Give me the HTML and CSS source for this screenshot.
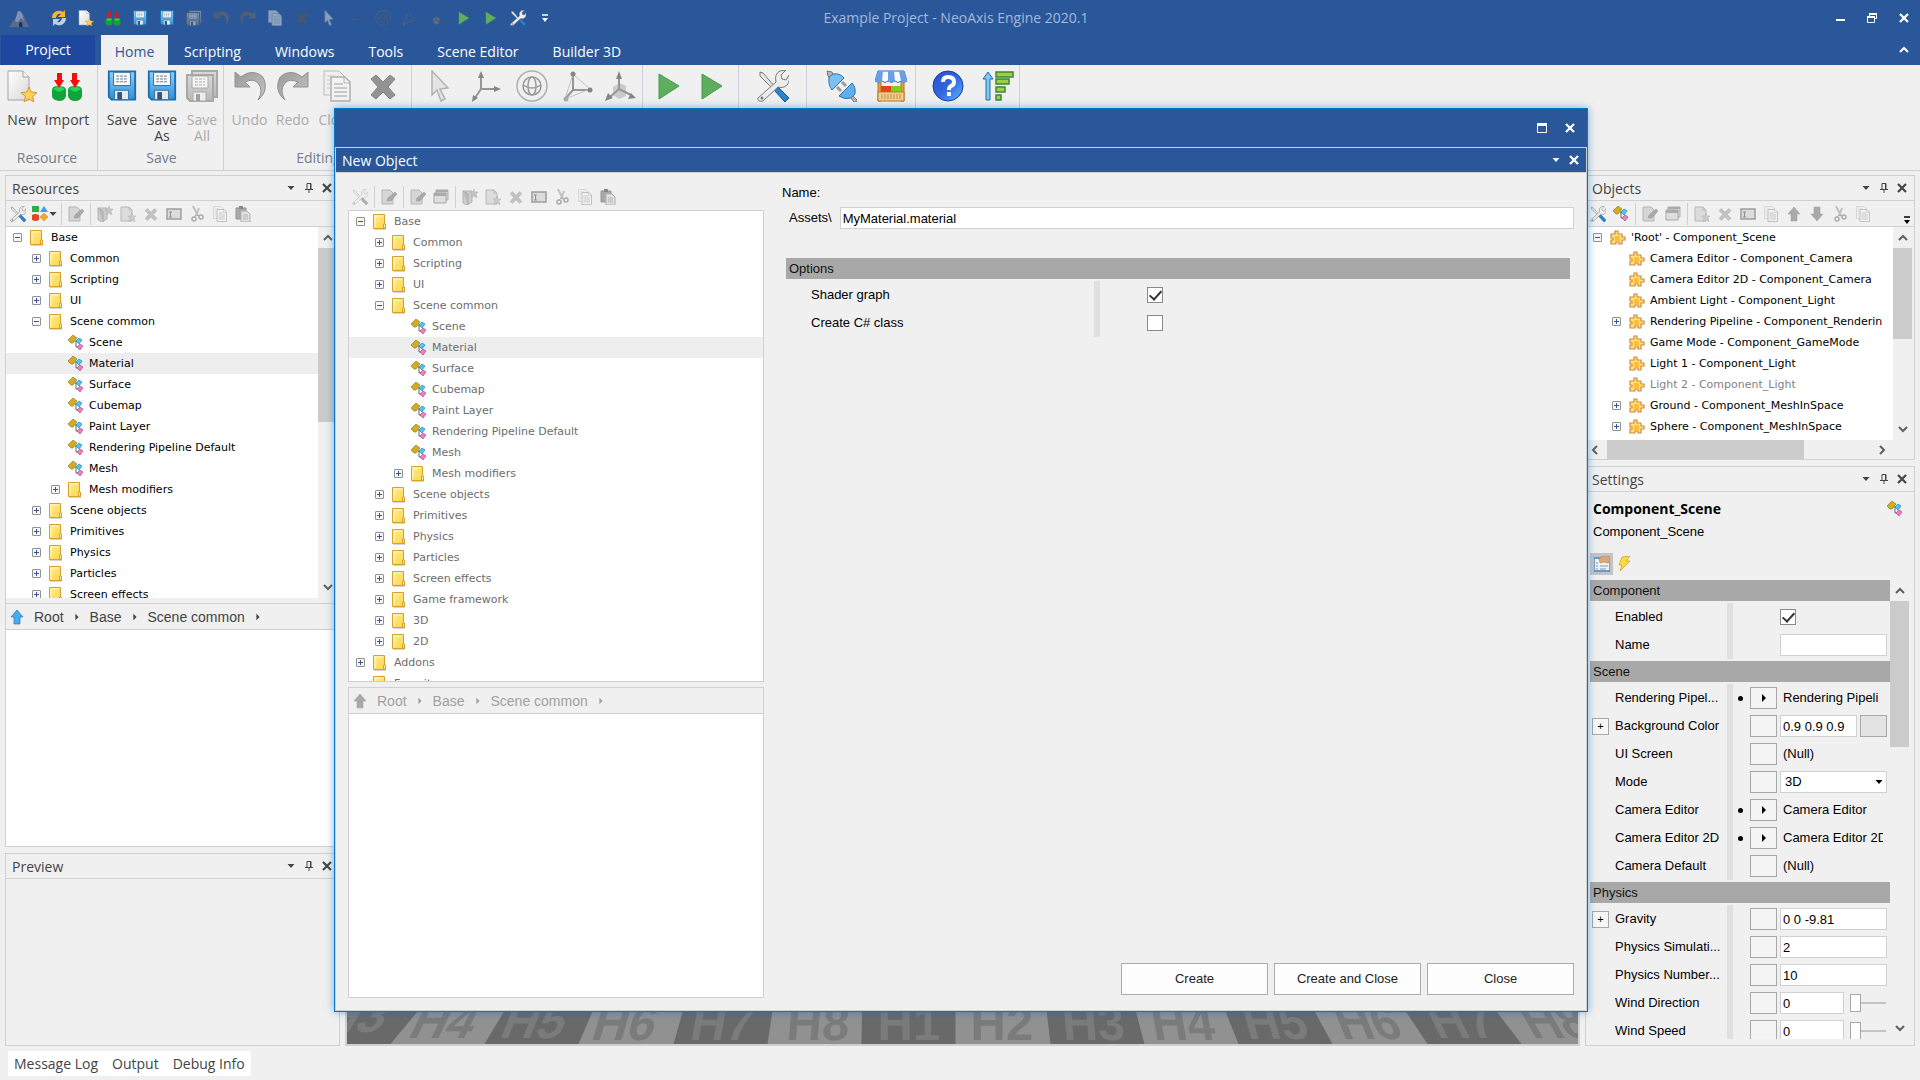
FILE: index.html
```html
<!DOCTYPE html>
<html lang="en">
<head>
  <meta charset="utf-8" />
  <meta name="viewport" content="width=device-width, initial-scale=1" />
  <title>Example Project - NeoAxis Engine 2020.1</title>
  <link rel="stylesheet" href="styles.css">
</head>
<body>
  <!-- Icon sprite -->
  <svg class="sprite" aria-hidden="true">
    <defs>
      <linearGradient id="g-blue" x1="0" y1="0" x2="0" y2="1"><stop offset="0" stop-color="#8fd0fb"/><stop offset="1" stop-color="#2f8fd8"/></linearGradient>
      <linearGradient id="g-page" x1="0" y1="0" x2="1" y2="1"><stop offset="0" stop-color="#ffffff"/><stop offset="1" stop-color="#d9d9d9"/></linearGradient>
      <linearGradient id="g-help" x1="0" y1="0" x2="1" y2="1"><stop offset="0" stop-color="#2a4fd0"/><stop offset=".5" stop-color="#2f66de"/><stop offset="1" stop-color="#5fb6ff"/></linearGradient>
      <linearGradient id="g-fold" x1="0" y1="0" x2="1" y2="1"><stop offset="0" stop-color="#fff0a0"/><stop offset=".5" stop-color="#fce068"/><stop offset="1" stop-color="#fad94f"/></linearGradient>
      <linearGradient id="g-grey" x1="0" y1="0" x2="1" y2="1"><stop offset="0" stop-color="#9a9a9a"/><stop offset="1" stop-color="#c4c4c4"/></linearGradient>

      <symbol id="i-logo" viewBox="0 0 20 20"><path d="M9 3q3-1 5 3l6 13h-6v-3q-1-3-3-1v4H0l4-6 2-2z" fill="#5d6b85"/><path d="M9 3q3 0 4 3l2 7-3-3-3 4-3-1z" fill="#7f93b8"/><path d="M10 19v-4q2-2 3 0v4z" fill="#1c3257"/></symbol>
      <symbol id="i-refresh" viewBox="0 0 16 16"><path d="M1 8a7 7 0 0 1 11-6l2-2v7H7l3-3q-4-1-5 4z" fill="#f7b928"/><path d="M15 8a7 7 0 0 1-11 6l-2 2V9h7l-3 3q4 1 5-4z" fill="#c3d0e2"/></symbol>
      <symbol id="i-new" viewBox="0 0 32 32"><path d="M2 1h15l6 6v23H2z" fill="url(#g-page)" stroke="#a3a3a3"/><path d="M17 1v6h6" fill="#f4f4f4" stroke="#a3a3a3"/><path d="m23 17 2 5 6 .6-4.500 4 1.500 5.400-5-3-5 3 1.500-5.400-4.500-4 6-.6z" fill="#ffd15c" stroke="#d8922a"/></symbol>
      <symbol id="i-import" viewBox="0 0 32 32"><path d="M1 20q0-4 6-4 8 0 8 4v6q-1 5-7 5-7-1-7-5zM17 20q0-4 7-4t7 4v6q-1 5-7 5t-7-5z" fill="#12a43a"/><path d="M2 19q6-5 12 0l-6 3zM18 19q6-5 12 0l-6 3z" fill="#27d557"/><path d="M6 3h5v7h2l-5 8-5-8h3zM21 3h5v7h3l-5 8-5-8h2z" fill="#f80d0d"/></symbol>
      <symbol id="i-save" viewBox="-1 0 34 33"><path d="M2 1h28v30H5l-3-3z" fill="url(#g-blue)" stroke="#1b6fae" stroke-width="2"/><path d="M7 2h18v14H7z" fill="#f7fafc" stroke="#2a6fa5"/><path d="M10 6h12M10 9h12M10 12h12" stroke="#5a6e80" stroke-dasharray="3 1"/><path d="M8 21h15v10H8z" fill="#e3ebf1" stroke="#2a6fa5"/><path d="M11 23h5v8h-5z" fill="#31587a"/></symbol>
      <symbol id="i-saveall" viewBox="0 0 32 32"><path d="M6 1h25v26H6z" fill="url(#g-blue)" stroke="#1b6fae" stroke-width="2"/><path d="M1 5h26v26H4l-3-3z" fill="url(#g-blue)" stroke="#1b6fae" stroke-width="2"/><path d="M6 6h16v12H6z" fill="#f7fafc" stroke="#2a6fa5"/><path d="M9 9h10M9 12h10M9 15h10" stroke="#5a6e80" stroke-dasharray="3 1"/><path d="M7 22h13v9H7z" fill="#e3ebf1" stroke="#2a6fa5"/><path d="M10 24h4v7h-4z" fill="#31587a"/></symbol>
      <symbol id="i-undo" viewBox="0 0 32 32"><path d="M1 2v15h15l-5-5q8-4 13 1 6 7 0 17 9-7 7-17-1-8-9-10-8-2-15 4z" fill="url(#g-grey)" stroke="#929292"/></symbol>
      <symbol id="i-redo" viewBox="0 0 32 32"><path d="M31 2v15H16l5-5q-8-4-13 1-6 7 0 17-9-7-7-17 1-8 9-10 8-2 15 4z" fill="url(#g-grey)" stroke="#929292"/></symbol>
      <symbol id="i-copy" viewBox="0 0 32 32"><path d="M3 1h15l5 5v19H3z" fill="#efefef" stroke="#bcbcbc"/><path d="M6 6h8M6 10h3M6 14h3M6 18h3" stroke="#c9c9c9"/><path d="M10 7h14l5 5v19H10z" fill="#f3f3f3" stroke="#b0b0b0" stroke-width="1.500"/><path d="M23 7v6h6" fill="none" stroke="#b5b5b5"/><path d="M13 14h9M13 18h13M13 22h13M13 26h13" stroke="#bababa" stroke-width="1.500"/></symbol>
      <symbol id="i-x" viewBox="0 0 32 32"><path d="m9 5 7 7 7-7 5 4-7 8 7 8-5 4-7-7-7 7-5-4 7-8-7-8z" fill="#939393" stroke="#858585"/></symbol>
      <symbol id="i-cursor" viewBox="0 0 32 32"><path d="M8 1l16 17-8 1 5 10-4 2-4-11-5 5z" fill="#e4e4e4" stroke="#b2b2b2" stroke-width="1.500"/></symbol>
      <symbol id="i-axes" viewBox="0 0 32 32"><path d="M11 19V5M11 19h15M11 19 5 28" fill="none" stroke="#969696" stroke-width="2"/><path d="m11 1 3 7H8zM31 19l-7 3v-6zM2 32l1-7 5 3z" fill="#868686"/></symbol>
      <symbol id="i-rotate" viewBox="0 0 32 32"><circle cx="16" cy="16" r="15" fill="none" stroke="#b0b0b0" stroke-width="1.500"/><circle cx="16" cy="16" r="9" fill="none" stroke="#999" stroke-width="1.500"/><ellipse cx="16" cy="16" rx="4" ry="9" fill="none" stroke="#999" stroke-width="1.500"/><path d="M7 15q9 6 18 0" fill="none" stroke="#999" stroke-width="1.500"/></symbol>
      <symbol id="i-vertex" viewBox="0 0 32 32"><path d="M11 20V5M11 20h17M11 20 3 29" fill="none" stroke="#969696" stroke-width="2"/><path d="M11 4l17 15M11 4 3 29l25-10" fill="none" stroke="#c2c2c2"/><circle cx="11" cy="4" r="2.500" fill="#868686"/><circle cx="28" cy="20" r="2.500" fill="#868686"/><circle cx="4" cy="29" r="2.500" fill="#ababab"/></symbol>
      <symbol id="i-scale" viewBox="0 0 32 32"><path d="m8 17 7-4 6 3v10l-7 3-6-4z" fill="#cbcbcb"/><path d="M14 19V6M14 19l12 6M14 19 5 27" fill="none" stroke="#969696" stroke-width="2"/><path d="m14 1 3 8h-6zM31 28l-8 1 3-6zM0 31l3-8 5 5z" fill="#868686"/></symbol>
      <symbol id="i-play" viewBox="0 0 32 32"><path d="M6 4l20 12L6 29z" fill="#5fae5f" stroke="#479a4d"/></symbol>
      <symbol id="i-tools" viewBox="0 0 32 32"><path d="m3 2 3 1 12 14-2 2L3 6z" fill="#e8e8e8" stroke="#777"/><path d="m17 20 3-4 12 12-4 4z" fill="#2b82cd" stroke="#15558f"/><path d="M1 28 19 12q-2-8 4-11l6-1-5 5 1 4 4 1 3-5q2 9-5 12-3 1-6 0L6 31q-6 1-5-3z" fill="#ededed" stroke="#7b7b7b"/><circle cx="5" cy="28" r="1.500" fill="#777"/></symbol>
      <symbol id="i-plug" viewBox="0 0 32 32"><path d="m2 1 5 1 2 5-3 2-3-3z" fill="#b5b5b5" stroke="#777"/><path d="m4 7 4-3q7-1 11 4L7 20q-4-5-3-13z" fill="#7dc0f5" stroke="#2d74ae"/><path d="m12 17 4 4M17 12l4 4" stroke="#9a9a9a" stroke-width="3"/><path d="M14 26 27 13q4 4 3 11l-4 4q-7 2-12-2z" fill="#5eaff0" stroke="#2d74ae"/><path d="m26 28 2-2 4 4v2h-3z" fill="#b5b5b5" stroke="#777"/></symbol>
      <symbol id="i-store" viewBox="0 0 32 32"><path d="M3 9h3v22H3zM26 9h3v22h-3z" fill="#e2a24a" stroke="#b27322"/><path d="M6 16h10v6H6z" fill="#e7421d"/><path d="M16 16h10v6H16z" fill="#7bd01c"/><path d="M3 22h26v9H3z" fill="#f3cf8c" stroke="#b87626"/><path d="M7 24v5M10 24v5M13 24v5M16 24v5M19 24v5M22 24v5M25 24v5" stroke="#c1883c"/><path d="M3 1h26l3 10q-3 3-6 0-3 3-6 0-3 3-7 0-3 3-6 0-3 3-7 0z" fill="#f6f9fd" stroke="#3d6bb5"/><path d="M3 1h5l-1 10q-3 3-7 0zM13 1h6l1 10q-3 3-7 0zM24 1h5l3 10q-3 3-6 0z" fill="#6a9fe8"/></symbol>
      <symbol id="i-help" viewBox="0 0 32 32"><circle cx="16" cy="16" r="15" fill="url(#g-help)" stroke="#1c3a9f"/><path d="M11 12q0-5 5-5 6 0 6 5 0 3-3 4-2 1-2 4" fill="none" stroke="#fff" stroke-width="4"/><path d="M15 22h4v4h-4z" fill="#fff"/></symbol>
      <symbol id="i-sort" viewBox="0 0 32 32"><path d="M4 30V9H1l5-7 5 7H8v21z" fill="#80c8f3" stroke="#266da6"/><path d="M14 2h17v5H14zM14 9h13v5H14zM14 17h9v5h-9zM14 25h5v5h-5z" fill="#9cd04a" stroke="#3d8735" stroke-width="1.500"/></symbol>

      <symbol id="i-edit" viewBox="0 0 16 16"><path d="M1 1h8l3 3v11H1z" fill="#d6d6d6" stroke="#b5b5b5"/><path d="M6 12l1-3 7-6 2 2-6 7z" fill="#a9a9a9" stroke="#999" stroke-width=".5"/></symbol>
      <symbol id="i-windows" viewBox="0 0 16 16"><path d="M3 1h12v10H3z" fill="#d9d9d9" stroke="#acacac"/><path d="M1 4h12v10H1z" fill="#dedede" stroke="#a8a8a8"/><path d="M1 4h12v3H1zM3 1h12v2H3z" fill="#ababab"/></symbol>
      <symbol id="i-box" viewBox="0 0 16 16"><path d="M1 2h9v11l-5 3-4-2z" fill="#cdcdcd" stroke="#b5b5b5"/><path d="m1 2 5 3v11" fill="#bcbcbc" stroke="#aaa"/><path d="m12 0 1 3h3l-2 2 1 4-3-2-3 2 1-4-2-2h3z" fill="#c4c4c4" stroke="#b0b0b0" stroke-width=".5"/></symbol>
      <symbol id="i-newdoc" viewBox="0 0 16 16"><path d="M1 1h8l3 3v11H1z" fill="#dcdcdc" stroke="#b8b8b8"/><path d="M9 1v3h3" fill="none" stroke="#b8b8b8"/><path d="m12 7 1 3h3l-2 2 1 4-3-2-3 2 1-4-2-2h3z" fill="#cbcbcb" stroke="#b3b3b3" stroke-width=".5"/></symbol>
      <symbol id="i-rename" viewBox="0 0 16 16"><path d="M1 3h14v10H1z" fill="#dcdcdc" stroke="#9d9d9d" stroke-width="1.500"/><path d="M3 6h3M3 11h3M4.500 6v5" stroke="#8f8f8f"/></symbol>
      <symbol id="i-cut" viewBox="0 0 16 16"><path d="m4 0 5 10M10 2 7 10" stroke="#c0c0c0" stroke-width="2"/><circle cx="5" cy="13" r="2" fill="none" stroke="#ababab" stroke-width="1.500"/><circle cx="12" cy="11" r="2" fill="none" stroke="#ababab" stroke-width="1.500"/><path d="m5 11 2-2 3 1" fill="none" stroke="#ababab"/></symbol>
      <symbol id="i-paste" viewBox="0 0 16 16"><path d="M1 2h10v11H1z" fill="#a9a9a9" stroke="#969696"/><path d="M4 0h4v3H4z" fill="#888"/><path d="M6 5h6l3 3v8H6z" fill="#e2e2e2" stroke="#b0b0b0"/><path d="M8 9h5M8 11h5M8 13h5" stroke="#b5b5b5"/></symbol>
      <symbol id="i-up" viewBox="0 0 16 16"><path d="m8 1 6 7h-3v7H5V8H2z" fill="#a9a9a9" stroke="#9c9c9c" stroke-width=".5"/></symbol>
      <symbol id="i-upblue" viewBox="0 0 16 16"><path d="m8 1 6 7h-3v7H5V8H2z" fill="#44aef0" stroke="#2876ae" stroke-width=".7"/></symbol>
      <symbol id="i-down" viewBox="0 0 16 16"><path d="m8 15 6-7h-3V1H5v7H2z" fill="#a9a9a9" stroke="#9c9c9c" stroke-width=".5"/></symbol>
      <symbol id="i-shapes" viewBox="0 0 16 16"><path d="M0 0h7v6H0z" fill="#2fae3c"/><path d="m12 0 4 6H8z" fill="#3b9cf2"/><path d="M0 9q3-2 7 0v5q-3 2-7 0z" fill="#e3491f"/><path d="m12 7 4 4-4 4-4-4z" fill="#f2a92b" stroke="#c9821a" stroke-width=".5"/></symbol>
      <symbol id="i-folder" viewBox="0 0 16 16"><path d="M1 15h12" stroke="#d5d5d5" stroke-width="2"/><path d="M.5.5h11v10h1v4H.5z" fill="url(#g-fold)" stroke="#d9a02d"/><path d="M2 13V2h8" fill="none" stroke="#fff6c8"/><path d="M10.500 14v-4h2v4z" fill="#fff3ae" stroke="#d9a02d"/></symbol>
      <symbol id="i-class" viewBox="0 0 16 16"><path d="M8 6v6h3M7 6h4" fill="none" stroke="#666"/><path d="m5 0 4 3-4 5H3L0 5z" fill="#d2ac26" stroke="#9c7c12" stroke-width=".7"/><path d="m11 3 3 2-3 4-3-3z" fill="#4cc6f3" stroke="#2388b4" stroke-width=".7"/><path d="m12 9 3 2-3 4-3-3z" fill="#ef7fc0" stroke="#b04a88" stroke-width=".7"/></symbol>
      <symbol id="i-puzzle" viewBox="0 0 16 16"><path d="M1 4h4V1h3v3h4v3h3v3h-3v4H9v-2H6v2H1v-4h2V8H1z" fill="#ffe27a" stroke="#cf8a3c" stroke-width="1.200"/><path d="M5 6h5v5H5z" fill="#ffbe3a"/></symbol>
      <symbol id="i-props" viewBox="0 0 16 16"><path d="M0 2h16v13H0z" fill="#eef4fa" stroke="#4487c2" stroke-width="1.500"/><path d="M2 7h2M2 10h2M2 13h2M6 10h8M6 13h6" stroke="#8494a4"/><path d="m5 3 3-3h8v6l-3 1-3-1-4 1z" fill="#dda878" stroke="#a87446" stroke-width=".5"/></symbol>
      <symbol id="i-bolt" viewBox="0 0 16 16"><path d="m5 1 8-1-4 5h4L3 15l2-6H2z" fill="#ffdc3c" stroke="#c79b1f" stroke-width=".7"/></symbol>

      <symbol id="i-close" viewBox="0 0 10 10"><path d="M1 1l8 8M9 1 1 9" stroke="currentColor" stroke-width="2.200"/></symbol>
      <symbol id="i-pin" viewBox="0 0 10 10"><path d="M3 6V.5h4V6M1 6.500h8M5 7v3M6.500 1v5" fill="none" stroke="currentColor"/></symbol>
      <symbol id="i-tri" viewBox="0 0 10 10"><path d="M1.500 3h7L5 7z" fill="currentColor"/></symbol>
      <symbol id="i-right" viewBox="0 0 10 10"><path d="M3 1v8l4-4z" fill="currentColor"/></symbol>
      <symbol id="i-more" viewBox="0 0 10 10"><path d="M2 2h6" stroke="currentColor" stroke-width="1.500"/><path d="M2 5h6L5 9z" fill="currentColor"/></symbol>
      <symbol id="i-min" viewBox="0 0 10 10"><path d="M1 7h9" stroke="currentColor" stroke-width="2"/></symbol>
      <symbol id="i-restore" viewBox="0 0 10 10"><path d="M2.500 3V.500h7v5H7" fill="none" stroke="currentColor"/><path d="M.5 4h7v5.500h-7z" fill="none" stroke="currentColor"/><path d="M0 4h8M2 1h8" stroke="currentColor" stroke-width="2"/></symbol>
      <symbol id="i-max" viewBox="0 0 10 10"><path d="M.5 1h9v8.500h-9z" fill="none" stroke="currentColor"/><path d="M0 1.500h10" stroke="currentColor" stroke-width="3"/></symbol>
      <symbol id="i-chup" viewBox="0 0 10 10"><path d="m1 7 4-4 4 4" fill="none" stroke="currentColor" stroke-width="2"/></symbol>
      <symbol id="i-chdown" viewBox="0 0 10 10"><path d="m1 3 4 4 4-4" fill="none" stroke="currentColor" stroke-width="2"/></symbol>
      <symbol id="i-chleft" viewBox="0 0 10 10"><path d="M7 1 3 5l4 4" fill="none" stroke="currentColor" stroke-width="2"/></symbol>
      <symbol id="i-chright" viewBox="0 0 10 10"><path d="m3 1 4 4-4 4" fill="none" stroke="currentColor" stroke-width="2"/></symbol>
    </defs>
  </svg>

  <div class="app">
    <header class="titlebar">
      <div class="quick-access">
        <svg class="logo"><use href="#i-logo"/></svg>
        <button aria-label="Refresh"><svg><use href="#i-refresh"/></svg></button>
        <button aria-label="New"><svg><use href="#i-new"/></svg></button>
        <button aria-label="Import"><svg><use href="#i-import"/></svg></button>
        <button aria-label="Save"><svg><use href="#i-save"/></svg></button>
        <button aria-label="Save As"><svg><use href="#i-save"/></svg></button>
        <button aria-label="Save All" class="off"><svg><use href="#i-saveall"/></svg></button>
        <button aria-label="Undo" class="off dark"><svg><use href="#i-undo"/></svg></button>
        <button aria-label="Redo" class="off dark"><svg><use href="#i-redo"/></svg></button>
        <button aria-label="Clone" class="off"><svg><use href="#i-copy"/></svg></button>
        <button aria-label="Delete" class="off dark"><svg><use href="#i-x"/></svg></button>
        <button aria-label="Select" class="off"><svg><use href="#i-cursor"/></svg></button>
        <button aria-label="Move" class="off dark"><svg><use href="#i-axes"/></svg></button>
        <button aria-label="Rotate" class="off dark"><svg><use href="#i-rotate"/></svg></button>
        <button aria-label="Vertex" class="off dark"><svg><use href="#i-vertex"/></svg></button>
        <button aria-label="Scale" class="off dark"><svg><use href="#i-scale"/></svg></button>
        <button aria-label="Play"><svg><use href="#i-play"/></svg></button>
        <button aria-label="Run"><svg><use href="#i-play"/></svg></button>
        <button aria-label="Options"><svg><use href="#i-tools"/></svg></button>
        <button aria-label="Customize"><svg class="glyph"><use href="#i-more"/></svg></button>
      </div>
      <h1 class="app-title">Example Project - NeoAxis Engine 2020.1</h1>
      <div class="window-buttons">
        <button aria-label="Minimize"><svg class="glyph"><use href="#i-min"/></svg></button>
        <button aria-label="Restore"><svg class="glyph"><use href="#i-restore"/></svg></button>
        <button aria-label="Close"><svg class="glyph"><use href="#i-close"/></svg></button>
      </div>
    </header>

    <nav class="ribbon-tabs">
      <button class="tab project">Project</button>
      <button class="tab active">Home</button>
      <button class="tab">Scripting</button>
      <button class="tab">Windows</button>
      <button class="tab">Tools</button>
      <button class="tab">Scene Editor</button>
      <button class="tab">Builder 3D</button>
      <button class="collapse" aria-label="Collapse ribbon"><svg class="glyph"><use href="#i-chup"/></svg></button>
    </nav>

    <section class="ribbon">
      <div class="group g-resource">
        <div class="tools">
          <button><svg><use href="#i-new"/></svg>New</button>
          <button class="w-xl"><svg><use href="#i-import"/></svg>Import</button>
        </div>
        <div class="group-name">Resource</div>
      </div>
      <div class="group g-save">
        <div class="tools">
          <button><svg><use href="#i-save"/></svg>Save</button>
          <button><svg><use href="#i-save"/></svg>Save<br>As</button>
          <button class="disabled"><svg class="dim"><use href="#i-saveall"/></svg>Save<br>All</button>
        </div>
        <div class="group-name">Save</div>
      </div>
      <div class="group g-edit">
        <div class="tools">
          <button class="w-m disabled"><svg><use href="#i-undo"/></svg>Undo</button>
          <button class="w-m disabled"><svg><use href="#i-redo"/></svg>Redo</button>
          <button class="w-l disabled"><svg><use href="#i-copy"/></svg>Clone</button>
          <button class="w-l disabled" aria-label="Delete"><svg><use href="#i-x"/></svg></button>
        </div>
        <div class="group-name">Editing</div>
      </div>
      <div class="group g-transform">
        <div class="tools">
          <button class="w-l" aria-label="Select"><svg><use href="#i-cursor"/></svg></button>
          <button class="w-l" aria-label="Move"><svg><use href="#i-axes"/></svg></button>
          <button class="w-l" aria-label="Rotate"><svg><use href="#i-rotate"/></svg></button>
          <button class="w-l" aria-label="Vertex"><svg><use href="#i-vertex"/></svg></button>
          <button aria-label="Scale"><svg><use href="#i-scale"/></svg></button>
        </div>
      </div>
      <div class="group g-play">
        <div class="tools">
          <button class="w-m" aria-label="Play"><svg><use href="#i-play"/></svg></button>
          <button class="w-m" aria-label="Run"><svg><use href="#i-play"/></svg></button>
        </div>
      </div>
      <div class="group g-options">
        <div class="tools"><button aria-label="Options"><svg><use href="#i-tools"/></svg></button></div>
      </div>
      <div class="group g-store">
        <div class="tools">
          <button class="w-xl" aria-label="Packages"><svg><use href="#i-plug"/></svg></button>
          <button class="w-xl" aria-label="Store"><svg><use href="#i-store"/></svg></button>
        </div>
      </div>
      <div class="group g-help">
        <div class="tools">
          <button class="w-xl" aria-label="Help"><svg><use href="#i-help"/></svg></button>
          <button class="w-xl" aria-label="Tips"><svg><use href="#i-sort"/></svg></button>
        </div>
      </div>
    </section>

    <main class="workspace">
      <div class="column left">
        <section class="panel resources">
          <header class="panel-head">
            <h2>Resources</h2>
            <button aria-label="Menu"><svg class="glyph"><use href="#i-tri"/></svg></button>
            <button aria-label="Pin"><svg class="glyph"><use href="#i-pin"/></svg></button>
            <button aria-label="Close"><svg class="glyph"><use href="#i-close"/></svg></button>
          </header>
          <div class="toolbar">
            <button aria-label="Options"><svg><use href="#i-tools"/></svg></button>
            <button aria-label="Filter" class="drop"><svg><use href="#i-shapes"/></svg><svg class="glyph"><use href="#i-tri"/></svg></button>
            <i class="sep"></i>
            <button aria-label="Edit"><svg><use href="#i-edit"/></svg></button>
            <i class="sep"></i>
            <button aria-label="New folder"><svg><use href="#i-box"/></svg></button>
            <button aria-label="New resource"><svg><use href="#i-newdoc"/></svg></button>
            <button aria-label="Delete"><svg class="dim"><use href="#i-x"/></svg></button>
            <button aria-label="Rename"><svg><use href="#i-rename"/></svg></button>
            <button aria-label="Cut"><svg><use href="#i-cut"/></svg></button>
            <button aria-label="Copy"><svg><use href="#i-copy"/></svg></button>
            <button aria-label="Paste"><svg><use href="#i-paste"/></svg></button>
          </div>
          <div class="scroll-row tree-area">
            <ul class="tree">
              <li><button class="toggle minus" aria-label="Collapse"></button><svg><use href="#i-folder"/></svg>Base</li>
              <li class="l1"><button class="toggle" aria-label="Expand"></button><svg><use href="#i-folder"/></svg>Common</li>
              <li class="l1"><button class="toggle" aria-label="Expand"></button><svg><use href="#i-folder"/></svg>Scripting</li>
              <li class="l1"><button class="toggle" aria-label="Expand"></button><svg><use href="#i-folder"/></svg>UI</li>
              <li class="l1"><button class="toggle minus" aria-label="Collapse"></button><svg><use href="#i-folder"/></svg>Scene common</li>
              <li class="l2 leaf"><svg><use href="#i-class"/></svg>Scene</li>
              <li class="l2 leaf selected"><svg><use href="#i-class"/></svg>Material</li>
              <li class="l2 leaf"><svg><use href="#i-class"/></svg>Surface</li>
              <li class="l2 leaf"><svg><use href="#i-class"/></svg>Cubemap</li>
              <li class="l2 leaf"><svg><use href="#i-class"/></svg>Paint Layer</li>
              <li class="l2 leaf"><svg><use href="#i-class"/></svg>Rendering Pipeline Default</li>
              <li class="l2 leaf"><svg><use href="#i-class"/></svg>Mesh</li>
              <li class="l2"><button class="toggle" aria-label="Expand"></button><svg><use href="#i-folder"/></svg>Mesh modifiers</li>
              <li class="l1"><button class="toggle" aria-label="Expand"></button><svg><use href="#i-folder"/></svg>Scene objects</li>
              <li class="l1"><button class="toggle" aria-label="Expand"></button><svg><use href="#i-folder"/></svg>Primitives</li>
              <li class="l1"><button class="toggle" aria-label="Expand"></button><svg><use href="#i-folder"/></svg>Physics</li>
              <li class="l1"><button class="toggle" aria-label="Expand"></button><svg><use href="#i-folder"/></svg>Particles</li>
              <li class="l1"><button class="toggle" aria-label="Expand"></button><svg><use href="#i-folder"/></svg>Screen effects</li>
            </ul>
            <div class="vscroll">
              <svg class="glyph"><use href="#i-chup"/></svg>
              <div class="track"><div class="thumb half"></div></div>
              <svg class="glyph"><use href="#i-chdown"/></svg>
            </div>
          </div>
          <nav class="crumbs">
            <svg class="up"><use href="#i-upblue"/></svg>
            <a href="#">Root</a><svg class="glyph"><use href="#i-right"/></svg>
            <a href="#">Base</a><svg class="glyph"><use href="#i-right"/></svg>
            <a href="#">Scene common</a><svg class="glyph"><use href="#i-right"/></svg>
          </nav>
          <div class="file-list"></div>
        </section>
        <section class="panel preview">
          <header class="panel-head">
            <h2>Preview</h2>
            <button aria-label="Menu"><svg class="glyph"><use href="#i-tri"/></svg></button>
            <button aria-label="Pin"><svg class="glyph"><use href="#i-pin"/></svg></button>
            <button aria-label="Close"><svg class="glyph"><use href="#i-close"/></svg></button>
          </header>
        </section>
      </div>

      <div class="viewport">
        <!-- Checkered ground seen in perspective -->
        <svg class="ground" viewBox="0 0 1232 60" preserveAspectRatio="xMidYMax slice">
          <rect width="1232" height="60" fill="#696969"/>
          <g fill="#919191">
            <path d="M44 60 94 0h80l-36 60zM232 60l26-60h86l-17 60zM421 60l9-60h86l-1 60zM609 60V0h88l7 60zM798 60l-16-60h86l24 60zM986 60 953 0h88l40 60zM1175 60l-46-60h90l56 60z"/>
          </g>
          <g class="tiles">
            <text x="-26" y="48" transform="translate(24 0) skewX(-30)">H3</text>
            <text x="58" y="54" transform="translate(28 0) skewX(-26)">H4</text>
            <text x="151" y="54" transform="translate(22 0) skewX(-22)">H5</text>
            <text x="243" y="56" transform="translate(16 0) skewX(-16)">H6</text>
            <text x="342" y="56" transform="translate(10 0) skewX(-10)">H7</text>
            <text x="440" y="56" transform="translate(4 0) skewX(-5)">H8</text>
            <text x="531" y="56">H1</text>
            <text x="624" y="56">H2</text>
            <text x="718" y="56" transform="translate(-6 0) skewX(5)">H3</text>
            <text x="810" y="56" transform="translate(-12 0) skewX(10)">H4</text>
            <text x="904" y="55" transform="translate(-18 0) skewX(16)">H5</text>
            <text x="998" y="55" transform="translate(-24 0) skewX(22)">H6</text>
            <text x="1093" y="54" transform="translate(-28 0) skewX(26)">H7</text>
            <text x="1187" y="54" transform="translate(-32 0) skewX(30)">H8</text>
          </g>
        </svg>
      </div>

      <div class="column right">
        <section class="panel objects">
          <header class="panel-head">
            <h2>Objects</h2>
            <button aria-label="Menu"><svg class="glyph"><use href="#i-tri"/></svg></button>
            <button aria-label="Pin"><svg class="glyph"><use href="#i-pin"/></svg></button>
            <button aria-label="Close"><svg class="glyph"><use href="#i-close"/></svg></button>
          </header>
          <div class="toolbar">
            <button aria-label="Options"><svg><use href="#i-tools"/></svg></button>
            <button aria-label="Show classes"><svg><use href="#i-class"/></svg></button>
            <i class="sep"></i>
            <button aria-label="Edit"><svg><use href="#i-edit"/></svg></button>
            <button aria-label="Windows"><svg><use href="#i-windows"/></svg></button>
            <i class="sep"></i>
            <button aria-label="New object"><svg><use href="#i-newdoc"/></svg></button>
            <button aria-label="Delete"><svg class="dim"><use href="#i-x"/></svg></button>
            <button aria-label="Rename"><svg><use href="#i-rename"/></svg></button>
            <button aria-label="Clone"><svg><use href="#i-copy"/></svg></button>
            <button aria-label="Move up"><svg><use href="#i-up"/></svg></button>
            <button aria-label="Move down"><svg><use href="#i-down"/></svg></button>
            <button aria-label="Cut"><svg><use href="#i-cut"/></svg></button>
            <button aria-label="Copy"><svg><use href="#i-copy"/></svg></button>
            <button aria-label="More" class="overflow"><svg class="glyph"><use href="#i-more"/></svg></button>
          </div>
          <div class="scroll-row tree-area">
            <ul class="tree">
              <li><button class="toggle minus" aria-label="Collapse"></button><svg><use href="#i-puzzle"/></svg>'Root' - Component_Scene</li>
              <li class="l1 leaf"><svg><use href="#i-puzzle"/></svg>Camera Editor - Component_Camera</li>
              <li class="l1 leaf"><svg><use href="#i-puzzle"/></svg>Camera Editor 2D - Component_Camera</li>
              <li class="l1 leaf"><svg><use href="#i-puzzle"/></svg>Ambient Light - Component_Light</li>
              <li class="l1"><button class="toggle" aria-label="Expand"></button><svg><use href="#i-puzzle"/></svg>Rendering Pipeline - Component_Renderin</li>
              <li class="l1 leaf"><svg><use href="#i-puzzle"/></svg>Game Mode - Component_GameMode</li>
              <li class="l1 leaf"><svg><use href="#i-puzzle"/></svg>Light 1 - Component_Light</li>
              <li class="l1 leaf muted"><svg><use href="#i-puzzle"/></svg>Light 2 - Component_Light</li>
              <li class="l1"><button class="toggle" aria-label="Expand"></button><svg><use href="#i-puzzle"/></svg>Ground - Component_MeshInSpace</li>
              <li class="l1"><button class="toggle" aria-label="Expand"></button><svg><use href="#i-puzzle"/></svg>Sphere - Component_MeshInSpace</li>
            </ul>
            <div class="vscroll">
              <svg class="glyph"><use href="#i-chup"/></svg>
              <div class="track"><div class="thumb half"></div></div>
              <svg class="glyph"><use href="#i-chdown"/></svg>
            </div>
          </div>
          <div class="hscroll">
            <svg class="glyph"><use href="#i-chleft"/></svg>
            <div class="track"><div class="thumb"></div></div>
            <svg class="glyph"><use href="#i-chright"/></svg>
          </div>
        </section>

        <section class="panel settings">
          <header class="panel-head">
            <h2>Settings</h2>
            <button aria-label="Menu"><svg class="glyph"><use href="#i-tri"/></svg></button>
            <button aria-label="Pin"><svg class="glyph"><use href="#i-pin"/></svg></button>
            <button aria-label="Close"><svg class="glyph"><use href="#i-close"/></svg></button>
          </header>
          <div class="object-title"><strong>Component_Scene</strong><svg><use href="#i-class"/></svg></div>
          <div class="object-type">Component_Scene</div>
          <div class="view-switch">
            <button class="on" aria-label="Properties"><svg><use href="#i-props"/></svg></button>
            <button aria-label="Events"><svg><use href="#i-bolt"/></svg></button>
          </div>
          <div class="scroll-row props-area">
            <div class="props">
              <h3 class="bar">Component</h3>
              <div class="rows">
                <div class="prop"><label for="enabled">Enabled</label><div class="value"><input type="checkbox" id="enabled" checked></div></div>
                <div class="prop"><label for="name">Name</label><div class="value"><input type="text" id="name"></div></div>
              </div>
              <h3 class="bar">Scene</h3>
              <div class="rows">
                <div class="prop"><span class="label">Rendering Pipel...</span><i class="dot"></i><button class="ref" aria-label="Reference"><svg class="glyph"><use href="#i-right"/></svg></button><div class="value link">Rendering Pipeli</div></div>
                <div class="prop"><button class="expand" aria-label="Expand">+</button><label for="bg">Background Color</label><button class="ref" aria-label="Reference"></button><div class="value"><input type="text" id="bg" value="0.9 0.9 0.9"><button class="swatch" aria-label="Pick color"></button></div></div>
                <div class="prop"><span class="label">UI Screen</span><button class="ref" aria-label="Reference"></button><div class="value link">(Null)</div></div>
                <div class="prop"><label for="mode">Mode</label><button class="ref" aria-label="Reference"></button><div class="value select"><select id="mode"><option>3D</option></select><svg class="glyph"><use href="#i-tri"/></svg></div></div>
                <div class="prop"><span class="label">Camera Editor</span><i class="dot"></i><button class="ref" aria-label="Reference"><svg class="glyph"><use href="#i-right"/></svg></button><div class="value link">Camera Editor</div></div>
                <div class="prop"><span class="label">Camera Editor 2D</span><i class="dot"></i><button class="ref" aria-label="Reference"><svg class="glyph"><use href="#i-right"/></svg></button><div class="value link">Camera Editor 2D</div></div>
                <div class="prop"><span class="label">Camera Default</span><button class="ref" aria-label="Reference"></button><div class="value link">(Null)</div></div>
              </div>
              <h3 class="bar">Physics</h3>
              <div class="rows">
                <div class="prop"><button class="expand" aria-label="Expand">+</button><label for="gravity">Gravity</label><button class="ref" aria-label="Reference"></button><div class="value"><input type="text" id="gravity" value="0 0 -9.81"></div></div>
                <div class="prop"><label for="steps">Physics Simulati...</label><button class="ref" aria-label="Reference"></button><div class="value"><input type="text" id="steps" value="2"></div></div>
                <div class="prop"><label for="iterations">Physics Number...</label><button class="ref" aria-label="Reference"></button><div class="value"><input type="text" id="iterations" value="10"></div></div>
                <div class="prop"><label for="wind-dir">Wind Direction</label><button class="ref" aria-label="Reference"></button><div class="value"><input type="text" id="wind-dir" value="0"><input type="range" aria-label="Wind Direction" value="0"></div></div>
                <div class="prop"><label for="wind-speed">Wind Speed</label><button class="ref" aria-label="Reference"></button><div class="value"><input type="text" id="wind-speed" value="0"><input type="range" aria-label="Wind Speed" value="0"></div></div>
              </div>
            </div>
            <div class="vscroll">
              <svg class="glyph"><use href="#i-chup"/></svg>
              <div class="track"><div class="thumb third"></div></div>
              <svg class="glyph"><use href="#i-chdown"/></svg>
            </div>
          </div>
        </section>
      </div>
    </main>

    <footer class="dock-tabs">
      <div class="dock-group">
        <button>Message Log</button>
        <button>Output</button>
        <button>Debug Info</button>
      </div>
    </footer>
  </div>

  <div class="dialog" role="dialog" aria-labelledby="dialog-title">
    <div class="dialog-bar">
      <button aria-label="Maximize"><svg class="glyph"><use href="#i-max"/></svg></button>
      <button aria-label="Close"><svg class="glyph"><use href="#i-close"/></svg></button>
    </div>
    <div class="dialog-frame">
      <header class="panel-head dialog-head">
        <h2 id="dialog-title">New Object</h2>
        <button aria-label="Menu"><svg class="glyph"><use href="#i-tri"/></svg></button>
        <button aria-label="Close"><svg class="glyph"><use href="#i-close"/></svg></button>
      </header>
      <div class="dialog-body">
        <div class="picker">
          <div class="toolbar">
            <button aria-label="Options"><svg class="dim"><use href="#i-tools"/></svg></button>
            <i class="sep"></i>
            <button aria-label="Open"><svg><use href="#i-edit"/></svg></button>
            <i class="sep"></i>
            <button aria-label="Edit"><svg><use href="#i-edit"/></svg></button>
            <button aria-label="Windows"><svg><use href="#i-windows"/></svg></button>
            <i class="sep"></i>
            <button aria-label="New folder"><svg><use href="#i-box"/></svg></button>
            <button aria-label="New resource"><svg><use href="#i-newdoc"/></svg></button>
            <button aria-label="Delete"><svg class="dim"><use href="#i-x"/></svg></button>
            <button aria-label="Rename"><svg><use href="#i-rename"/></svg></button>
            <button aria-label="Cut"><svg><use href="#i-cut"/></svg></button>
            <button aria-label="Copy"><svg><use href="#i-copy"/></svg></button>
            <button aria-label="Paste"><svg><use href="#i-paste"/></svg></button>
          </div>
          <div class="framed tree-frame">
            <ul class="tree faded">
              <li><button class="toggle minus" aria-label="Collapse"></button><svg><use href="#i-folder"/></svg>Base</li>
              <li class="l1"><button class="toggle" aria-label="Expand"></button><svg><use href="#i-folder"/></svg>Common</li>
              <li class="l1"><button class="toggle" aria-label="Expand"></button><svg><use href="#i-folder"/></svg>Scripting</li>
              <li class="l1"><button class="toggle" aria-label="Expand"></button><svg><use href="#i-folder"/></svg>UI</li>
              <li class="l1"><button class="toggle minus" aria-label="Collapse"></button><svg><use href="#i-folder"/></svg>Scene common</li>
              <li class="l2 leaf"><svg><use href="#i-class"/></svg>Scene</li>
              <li class="l2 leaf selected"><svg><use href="#i-class"/></svg>Material</li>
              <li class="l2 leaf"><svg><use href="#i-class"/></svg>Surface</li>
              <li class="l2 leaf"><svg><use href="#i-class"/></svg>Cubemap</li>
              <li class="l2 leaf"><svg><use href="#i-class"/></svg>Paint Layer</li>
              <li class="l2 leaf"><svg><use href="#i-class"/></svg>Rendering Pipeline Default</li>
              <li class="l2 leaf"><svg><use href="#i-class"/></svg>Mesh</li>
              <li class="l2"><button class="toggle" aria-label="Expand"></button><svg><use href="#i-folder"/></svg>Mesh modifiers</li>
              <li class="l1"><button class="toggle" aria-label="Expand"></button><svg><use href="#i-folder"/></svg>Scene objects</li>
              <li class="l1"><button class="toggle" aria-label="Expand"></button><svg><use href="#i-folder"/></svg>Primitives</li>
              <li class="l1"><button class="toggle" aria-label="Expand"></button><svg><use href="#i-folder"/></svg>Physics</li>
              <li class="l1"><button class="toggle" aria-label="Expand"></button><svg><use href="#i-folder"/></svg>Particles</li>
              <li class="l1"><button class="toggle" aria-label="Expand"></button><svg><use href="#i-folder"/></svg>Screen effects</li>
              <li class="l1"><button class="toggle" aria-label="Expand"></button><svg><use href="#i-folder"/></svg>Game framework</li>
              <li class="l1"><button class="toggle" aria-label="Expand"></button><svg><use href="#i-folder"/></svg>3D</li>
              <li class="l1"><button class="toggle" aria-label="Expand"></button><svg><use href="#i-folder"/></svg>2D</li>
              <li><button class="toggle" aria-label="Expand"></button><svg><use href="#i-folder"/></svg>Addons</li>
              <li class="leaf"><svg><use href="#i-folder"/></svg>Favorites</li>
            </ul>
          </div>
          <div class="framed list-frame">
            <nav class="crumbs faded">
              <svg class="up"><use href="#i-up"/></svg>
              <a href="#">Root</a><svg class="glyph"><use href="#i-right"/></svg>
              <a href="#">Base</a><svg class="glyph"><use href="#i-right"/></svg>
              <a href="#">Scene common</a><svg class="glyph"><use href="#i-right"/></svg>
            </nav>
          </div>
        </div>
        <form class="details">
          <label for="file-name">Name:</label>
          <div class="name-row">
            <span>Assets\</span>
            <input type="text" id="file-name" value="MyMaterial.material">
          </div>
          <div class="options">
            <h3 class="bar">Options</h3>
            <div class="rows">
              <div class="option"><label for="shader">Shader graph</label><div class="value"><input type="checkbox" id="shader" checked></div></div>
              <div class="option"><label for="csharp">Create C# class</label><div class="value"><input type="checkbox" id="csharp"></div></div>
            </div>
          </div>
          <div class="actions">
            <button type="button">Create</button>
            <button type="button">Create and Close</button>
            <button type="button">Close</button>
          </div>
        </form>
      </div>
    </div>
  </div>
</body>
</html>
```

FILE: styles.css
```css
* {
  margin: 0;
  padding: 0;
  box-sizing: border-box;
}

:root {
  --blue: #2a579a;
  --bg: #f0f0f0;
  --line: #d0d0d0;
  --ui: "Open Sans", "Noto Sans", sans-serif;
  --form: "Liberation Sans", Arial, sans-serif;
  --tree: "DejaVu Sans", Verdana, sans-serif;
}

body {
  background: var(--bg);
  color: #444;
  font: 14px/18px var(--ui);
  overflow: hidden;
}

button {
  background: none;
  border: 0;
  color: inherit;
  font: inherit;
}

svg {
  display: block;
  flex: none;
  width: 16px;
  height: 16px;
}

.glyph {
  width: 10px;
  height: 10px;
}

.sprite {
  position: absolute;
  width: 0;
  height: 0;
}

.dim {
  filter: grayscale(1);
  opacity: 0.5;
}

.app {
  display: flex;
  flex-direction: column;
  height: 100vh;
}

/* Title bar */
.titlebar {
  display: grid;
  grid-template-columns: 1fr auto 1fr;
  align-items: center;
  height: 35px;
  background: var(--blue);
  color: #fff;
}

.quick-access {
  display: flex;
  align-items: center;
  padding-left: 9px;
}

.quick-access .logo {
  width: 20px;
  height: 20px;
  margin-right: 16px;
}

.quick-access button {
  display: grid;
  place-items: center;
  width: 27px;
  height: 24px;
}

.quick-access .off {
  opacity: 0.5;
  filter: grayscale(1);
}

.quick-access .dark {
  opacity: 0.6;
  filter: brightness(0.6);
}

.app-title {
  font-size: 14px;
  font-weight: 400;
  color: #a5b9d8;
  padding-right: 8px;
}

.window-buttons {
  display: flex;
  justify-content: flex-end;
}

.window-buttons button {
  display: grid;
  place-items: center;
  width: 32px;
  height: 24px;
}

/* Ribbon */
.ribbon-tabs {
  display: flex;
  height: 30px;
  background: var(--blue);
  color: #fff;
  padding-left: 1px;
}

.tab {
  padding: 3px 16px 0;
  margin-right: 2px;
}

.tab.project {
  width: 94px;
  margin-right: 6px;
  background: #1e479f;
  padding-top: 0;
}

.tab.active {
  width: 67px;
  margin-right: 0;
  background: var(--bg);
  color: var(--blue);
  padding: 3px 0 0;
}

.collapse {
  margin-left: auto;
  padding: 0 11px;
}

.ribbon {
  display: flex;
  height: 106px;
  border-bottom: 1px solid var(--line);
}

.group {
  display: flex;
  flex-direction: column;
  justify-content: space-between;
  border-right: 1px solid #cdd1d6;
  padding: 5px 2px 3px;
}

.g-resource { width: 98px; padding-right: 5px; }
.g-save { width: 126px; padding-left: 4px; }
.g-edit { width: 188px; padding-left: 4px; }
.g-transform { width: 231px; padding-left: 5px; }
.g-play { width: 96px; padding-left: 4px; }
.g-options { width: 68px; padding-left: 14px; }
.g-store { width: 109px; padding-left: 9px; }
.g-help { width: 104px; padding-left: 7px; }

.tools {
  display: flex;
}

.tools button {
  display: flex;
  flex: none;
  flex-direction: column;
  align-items: center;
  width: 40px;
  line-height: 16px;
}

.tools svg {
  width: 32px;
  height: 32px;
  margin-bottom: 10px;
}

.tools .w-m { width: 43px; }
.tools .w-l { width: 46px; }
.tools .w-xl { width: 50px; }

.tools .disabled {
  color: #ababab;
}

.group-name {
  text-align: center;
  color: #737c8c;
}

/* Docked panels */
.workspace {
  display: grid;
  grid-template-columns: 335px 1fr 330px;
  gap: 5px;
  flex: 1;
  min-height: 0;
  padding: 4px 5px 5px;
}

.column {
  display: flex;
  flex-direction: column;
  gap: 6px;
  min-height: 0;
}

.panel {
  display: flex;
  flex-direction: column;
  border: 1px solid var(--line);
  min-height: 0;
}

.resources { flex: 1; }
.preview { height: 193px; }
.objects { height: 285px; }
.settings { flex: 1; }

.panel-head {
  display: flex;
  align-items: center;
  height: 25px;
  flex: none;
  border-bottom: 1px solid var(--line);
  padding: 0 3px 0 6px;
}

.panel-head h2 {
  flex: 1;
  padding-top: 2px;
  font-size: 14px;
  font-weight: 400;
}

.panel-head button {
  display: grid;
  place-items: center;
  width: 18px;
  height: 22px;
}

.toolbar {
  display: flex;
  align-items: center;
  flex: none;
  height: 26px;
  border-bottom: 1px solid var(--line);
}

.toolbar button {
  display: grid;
  place-items: center;
  width: 23px;
  height: 22px;
}

.toolbar .drop {
  display: flex;
  align-items: center;
  width: 29px;
  padding-left: 3px;
}

.sep {
  width: 1px;
  height: 22px;
  margin: 0 2px 0 3px;
  background: var(--line);
}

.toolbar .overflow {
  margin-left: auto;
  width: 14px;
  align-items: end;
  color: #000;
}

.scroll-row {
  display: flex;
  flex: 1;
  min-height: 0;
}

.tree {
  flex: 1;
  min-width: 0;
  list-style: none;
  overflow: hidden;
  background: #fff;
  color: #000;
  font: 11px/21px var(--tree);
}

.tree li {
  display: flex;
  align-items: center;
  height: 21px;
  padding-left: 7px;
  white-space: nowrap;
}

.tree li svg {
  margin: 0 5px 0 8px;
}

.tree .leaf { padding-left: 16px; }
.tree .l1 { padding-left: 26px; }
.tree .l1.leaf { padding-left: 35px; }
.tree .l2 { padding-left: 45px; }
.tree .l2.leaf { padding-left: 54px; }

.tree .selected { background: #eee; }
.tree .muted { color: #838383; }
.tree.faded { color: #6d6d6d; }

.toggle {
  flex: none;
  width: 9px;
  height: 9px;
  border: 1px solid #919191;
  border-radius: 1px;
  background:
    linear-gradient(#3a53a0, #3a53a0) center / 5px 1px no-repeat,
    linear-gradient(#3a53a0, #3a53a0) center / 1px 5px no-repeat,
    #f6f6f6;
}

.toggle.minus {
  background:
    linear-gradient(#3a53a0, #3a53a0) center / 5px 1px no-repeat,
    #f6f6f6;
}

.vscroll,
.hscroll {
  display: flex;
  align-items: center;
  flex: none;
  color: #606060;
}

.vscroll {
  flex-direction: column;
  width: 19px;
  padding: 6px 0;
  gap: 5px;
}

.tree-area .vscroll {
  margin-right: 2px;
}

.vscroll .track {
  flex: 1;
  width: 100%;
}

.hscroll {
  height: 19px;
  padding: 0 27px 0 4px;
  gap: 7px;
}

.hscroll .track {
  flex: 1;
  height: 100%;
}

.thumb {
  width: 75%;
  height: 100%;
  background: #cbcbcb;
}

.vscroll .thumb { width: 100%; }
.thumb.half { height: 53%; }
.thumb.third { height: 35%; }

.crumbs {
  display: flex;
  align-items: center;
  flex: none;
  height: 26px;
  border-bottom: 1px solid var(--line);
  padding-left: 3px;
  font-family: var(--form);
}

.crumbs a {
  color: inherit;
  text-decoration: none;
  margin-left: 9px;
}

.crumbs .glyph {
  margin-left: 9px;
  width: 8px;
  height: 8px;
}

.crumbs.faded {
  color: #a0a0a0;
}

.resources .crumbs {
  height: 27px;
  margin-top: 5px;
  border-top: 1px solid var(--line);
}

.resources .tree-area {
  flex: none;
  height: 371px;
}

.objects .tree-area { flex: 1; }

.file-list {
  flex: 1;
  background: #fff;
}

/* Scene view */
.viewport {
  display: flex;
  align-items: flex-end;
  border: 2px solid #d0d0d0;
  background: #696969;
  overflow: hidden;
}

.ground {
  width: 100%;
  height: 60px;
}

.tiles {
  font: bold 49px var(--form);
  fill: #7b7b7b;
}

/* Settings */
.object-title {
  display: flex;
  justify-content: space-between;
  align-items: center;
  height: 31px;
  padding: 3px 11px 0 7px;
  color: #000;
}

.object-type {
  padding-left: 7px;
  color: #000;
  font: 13px/17px var(--form);
}

.view-switch {
  display: flex;
  margin: 13px 0 5px 4px;
}

.view-switch button {
  display: grid;
  place-items: center;
  width: 23px;
  height: 22px;
}

.view-switch .on {
  background: #c4c4c4;
}

.props-area {
  padding: 0 5px 6px 4px;
}

.props {
  flex: 1;
  min-width: 0;
  overflow: hidden;
  color: #000;
  font: 13px/18px var(--form);
}

.bar {
  height: 21px;
  padding-left: 3px;
  background: #a8a8a8;
  color: #111;
  font: 13px/21px var(--form);
}

.rows {
  padding: 2px 0;
}

.prop {
  display: grid;
  grid-template-columns: 25px 112px 6px 17px 27px 1fr;
  align-items: center;
  height: 28px;
}

.prop::before {
  content: "";
  grid-area: 1 / 3;
  align-self: stretch;
  background: #e0e0e0;
}

.prop label,
.prop .label {
  grid-area: 1 / 2;
  white-space: nowrap;
}

.expand {
  grid-area: 1 / 1;
  width: 17px;
  height: 17px;
  margin-left: 2px;
  border: 1px solid #a8a8a8;
  background: #f7f7f7;
  font-size: 11px;
  line-height: 13px;
}

.dot {
  grid-area: 1 / 4;
  width: 5px;
  height: 5px;
  margin-left: 5px;
  border-radius: 50%;
  background: #000;
}

.ref {
  grid-area: 1 / 5;
  display: grid;
  place-items: center;
  height: 22px;
  border: 1px solid #a8a8a8;
  background: #f4f4f4;
}

.prop .value {
  grid-area: 1 / 6;
  display: flex;
  align-items: center;
  gap: 3px;
  min-width: 0;
  height: 22px;
  margin: 0 3px;
}

.prop .link {
  display: block;
  line-height: 22px;
  overflow: hidden;
  white-space: nowrap;
  margin: 0 7px 0 6px;
}

input[type="text"],
select {
  flex: 1;
  min-width: 0;
  height: 22px;
  border: 1px solid var(--line);
  border-radius: 0;
  background: #fff;
  padding: 0 2px;
  color: #000;
  font: 13px/18px var(--form);
}

select {
  appearance: none;
  padding-left: 4px;
}

.select {
  position: relative;
}

.select .glyph {
  position: absolute;
  right: 3px;
  top: 6px;
}

.swatch {
  width: 27px;
  height: 22px;
  border: 1px solid #a8a8a8;
  background: #e3e3e3;
}

input[type="checkbox"] {
  appearance: none;
  display: grid;
  justify-items: center;
  width: 16px;
  height: 16px;
  border: 1px solid #8a8a8a;
  background: #fff;
}

input[type="checkbox"]:checked::after {
  content: "";
  width: 5px;
  height: 10px;
  border: solid #333;
  border-width: 0 2px 2px 0;
  transform: rotate(42deg);
}

input[type="range"] {
  appearance: none;
  width: 36px;
  height: 22px;
  margin: 0 1px 0 3px;
  background: linear-gradient(#c4c4c4, #c4c4c4) center / 100% 2px no-repeat;
}

input[type="range"]::-webkit-slider-thumb {
  appearance: none;
  width: 11px;
  height: 18px;
  border: 1px solid #a8a8a8;
  background: #fff;
}

/* Bottom tabs */
.dock-tabs {
  flex: none;
  display: flex;
  height: 29px;
  padding: 0 8px 4px;
}

.dock-group {
  display: flex;
  gap: 2px;
  background: #fff;
}

.dock-group button {
  padding: 0 6px;
}

/* New Object window */
.dialog {
  position: absolute;
  inset: 108px 332px 68px 334px;
  display: flex;
  flex-direction: column;
  border: 1px solid #0a74c8;
  background: var(--blue);
  color: #fff;
  box-shadow: 0 0 8px rgba(0, 110, 200, 0.5);
}

.dialog-bar {
  display: flex;
  justify-content: flex-end;
  height: 38px;
  padding: 0 3px;
}

.dialog-bar button {
  display: grid;
  place-items: center;
  width: 28px;
}

.dialog-frame {
  flex: 1;
  display: flex;
  flex-direction: column;
  min-height: 0;
  border: 1px solid var(--line);
}

.dialog-head {
  padding-right: 3px;
}

.dialog-body {
  flex: 1;
  display: flex;
  gap: 18px;
  min-height: 0;
  padding: 11px 12px 12px;
  background: var(--bg);
  color: #000;
}

.picker {
  display: flex;
  flex-direction: column;
  width: 416px;
}

.picker .toolbar {
  border: 0;
  height: 26px;
}

.framed {
  border: 1px solid var(--line);
  background: #fff;
}

.tree-frame {
  flex: 1;
  overflow: hidden;
}

.list-frame {
  height: 311px;
  margin-top: 5px;
}

.list-frame .crumbs {
  background: var(--bg);
}

.details {
  flex: 1;
  display: flex;
  flex-direction: column;
  font: 13px/18px var(--form);
}

.name-row {
  display: flex;
  align-items: center;
  gap: 8px;
  margin-top: 5px;
  padding-left: 7px;
}

.options {
  margin: 29px 4px 0;
}

.option {
  display: grid;
  grid-template-columns: 308px 6px 1fr;
  align-items: center;
  height: 28px;
}

.option::before {
  content: "";
  grid-area: 1 / 2;
  align-self: stretch;
  background: #e0e0e0;
}

.option label {
  grid-area: 1 / 1;
  padding-left: 25px;
}

.option .value {
  grid-area: 1 / 3;
  padding-left: 47px;
}

.actions {
  display: flex;
  justify-content: flex-end;
  gap: 6px;
  margin-top: auto;
  padding-bottom: 3px;
}

.actions button {
  width: 147px;
  height: 32px;
  border: 1px solid #ababab;
  background: #fdfdfd;
  color: #222;
}
```
